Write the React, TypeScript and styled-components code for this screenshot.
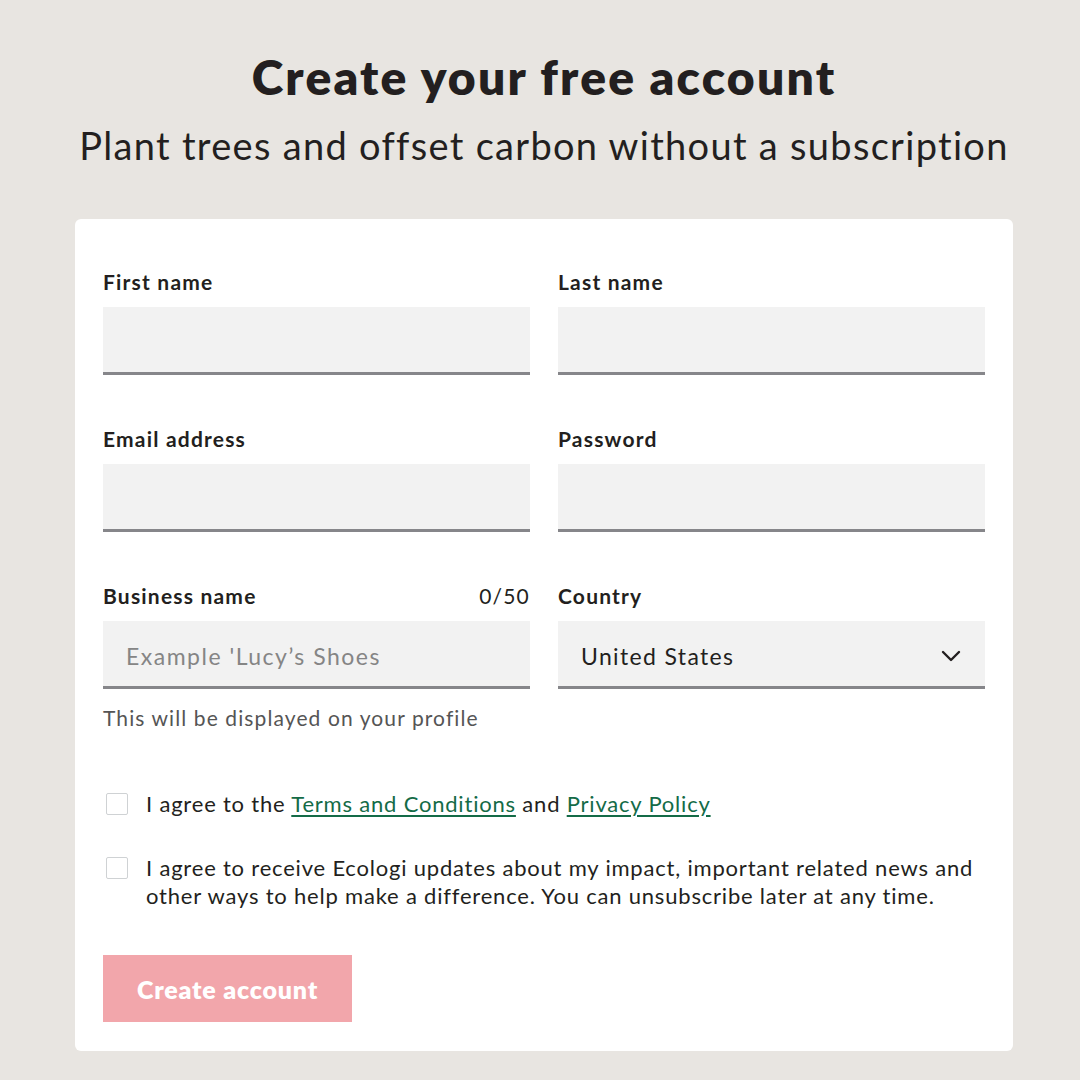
import * as React from 'react'
import styled, { createGlobalStyle } from 'styled-components'

const GlobalStyle = createGlobalStyle`
  body {
    margin: 0;
    background: #e8e5e1;
    font-family: Lato, "Noto Sans", sans-serif;
    color: #231f20;
  }
`

const Page = styled.main`
  width: 1080px;
  height: 1080px;
  display: flex;
  flex-direction: column;
  align-items: center;
  padding: 48px 0 0 8px;
  box-sizing: border-box;
`

const Title = styled.h1`
  margin: 0;
  font-size: 48px;
  line-height: 58px;
  font-weight: 800;
  letter-spacing: 2.2px;
`

const Subtitle = styled.p`
  margin: 15px 0 0;
  font-size: 38px;
  line-height: 48px;
  font-weight: 400;
  letter-spacing: 1.3px;
`

const Card = styled.form`
  margin-top: 50px;
  width: 938px;
  background: #fff;
  border-radius: 6px;
  padding: 50px 28px 29px;
  box-sizing: border-box;
`

const Grid = styled.div`
  display: grid;
  grid-template-columns: 1fr 1fr;
  column-gap: 28px;
  row-gap: 51px;
`

const Field = styled.div`
  display: flex;
  flex-direction: column;
`

const LabelRow = styled.div`
  display: flex;
  justify-content: space-between;
  align-items: center;
  height: 24px;
  margin-bottom: 14px;
`

const Label = styled.label`
  font-size: 21px;
  font-weight: 700;
  letter-spacing: 1.2px;
`

const Counter = styled.span`
  font-size: 21px;
  letter-spacing: 1.2px;
`

const Input = styled.input`
  height: 68px;
  box-sizing: border-box;
  border: none;
  border-bottom: 3px solid #86868a;
  background: #f2f2f2;
  padding: 4px 23px 0;
  font-family: inherit;
  font-size: 23px;
  letter-spacing: 1.5px;
  color: #231f20;
  outline: none;

  &::placeholder {
    color: #858585;
  }
`

const Select = styled.div`
  height: 68px;
  box-sizing: border-box;
  border-bottom: 3px solid #86868a;
  background: #f2f2f2;
  padding: 4px 24px 0 23px;
  display: flex;
  align-items: center;
  justify-content: space-between;
  font-size: 23px;
  letter-spacing: 1.35px;
`

const Helper = styled.p`
  margin: 17px 0 0;
  font-size: 21px;
  line-height: 24px;
  color: #555;
  letter-spacing: 1.1px;
`

const Checks = styled.div`
  margin-top: 60px;
  display: flex;
  flex-direction: column;
  gap: 36px;
`

const CheckRow = styled.label`
  display: flex;
  align-items: flex-start;
  gap: 18px;
  padding-left: 3px;
  font-size: 22px;
  line-height: 28px;
  letter-spacing: 0.8px;
`

const Box = styled.span`
  flex: none;
  width: 22px;
  height: 22px;
  margin-top: 3px;
  box-sizing: border-box;
  border: 1.5px solid #cfd2d4;
  border-radius: 2px;
  background: #fff;
`

const Link = styled.a`
  color: #146b47;
  text-decoration: underline;
  text-underline-offset: 3px;
`

const Button = styled.button`
  margin-top: 45px;
  width: 249px;
  height: 67px;
  border: none;
  background: #f2a6ab;
  color: #fff;
  font-family: inherit;
  font-size: 25px;
  font-weight: 800;
  letter-spacing: 0.8px;
`

const Chevron = () => (
  <svg width="20" height="12" viewBox="0 0 20 12" fill="none">
    <path d="M2 2l8 8 8-8" stroke="#231f20" strokeWidth="2.4" strokeLinecap="round" strokeLinejoin="round" />
  </svg>
)

const App: React.FC<{}> = () => {
  return (
    <React.Fragment>
      <GlobalStyle />
      <Page>
        <Title>Create your free account</Title>
        <Subtitle>Plant trees and offset carbon without a subscription</Subtitle>
        <Card>
          <Grid>
            <Field>
              <LabelRow><Label>First name</Label></LabelRow>
              <Input />
            </Field>
            <Field>
              <LabelRow><Label>Last name</Label></LabelRow>
              <Input />
            </Field>
            <Field>
              <LabelRow><Label>Email address</Label></LabelRow>
              <Input />
            </Field>
            <Field>
              <LabelRow><Label>Password</Label></LabelRow>
              <Input type="password" />
            </Field>
            <Field>
              <LabelRow>
                <Label>Business name</Label>
                <Counter>0/50</Counter>
              </LabelRow>
              <Input placeholder="Example 'Lucy’s Shoes" />
              <Helper>This will be displayed on your profile</Helper>
            </Field>
            <Field>
              <LabelRow><Label>Country</Label></LabelRow>
              <Select>
                United States
                <Chevron />
              </Select>
            </Field>
          </Grid>
          <Checks>
            <CheckRow>
              <Box />
              <span>
                I agree to the <Link>Terms and Conditions</Link> and <Link>Privacy Policy</Link>
              </span>
            </CheckRow>
            <CheckRow>
              <Box />
              <span>
                I agree to receive Ecologi updates about my impact, important related news and other
                ways to help make a difference. You can unsubscribe later at any time.
              </span>
            </CheckRow>
          </Checks>
          <Button type="button">Create account</Button>
        </Card>
      </Page>
    </React.Fragment>
  )
}

export default App
